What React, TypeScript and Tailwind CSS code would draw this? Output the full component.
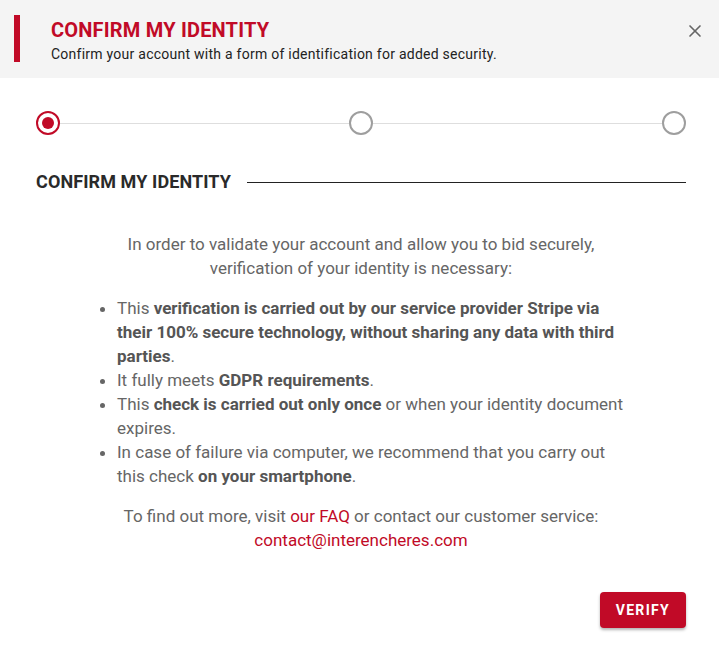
import { X } from "lucide-react";

const Step = ({ active }: { active?: boolean }) => (
    <div
        className={`flex items-center justify-center w-6 h-6 rounded-full border-2 shrink-0 ${
            active ? "border-[#c10a27]" : "border-[#9e9e9e]"
        }`}
    >
        {active && <div className="w-3 h-3 rounded-full bg-[#c10a27]" />}
    </div>
);

export default function App() {
    return (
        <div className="w-[719px] h-[656px] bg-white font-['Roboto',sans-serif] overflow-hidden">
            <header className="flex items-start justify-between h-[78px] bg-[#f4f4f4] pl-[14px] pr-[14px] pt-[15px]">
                <div className="flex gap-[31px]">
                    <div className="w-[6px] h-[47px] bg-[#c10a27]" />
                    <div className="flex flex-col pt-[3px]">
                        <h1 className="text-[20px] leading-[24px] font-bold text-[#c10a27] tracking-[0.2px]">
                            CONFIRM MY IDENTITY
                        </h1>
                        <p className="mt-[4px] text-[14px] leading-[17px] text-[#222] tracking-[0.25px]">
                            Confirm your account with a form of identification for added security.
                        </p>
                    </div>
                </div>
                <button className="mt-[6px] text-[#666]">
                    <X size={20} strokeWidth={2} />
                </button>
            </header>

            <div className="flex items-center pl-[36px] pr-[33px] pt-[33px]">
                <Step active />
                <div className="flex-1 h-px bg-[#dedede]" />
                <Step />
                <div className="flex-1 h-px bg-[#dedede]" />
                <Step />
            </div>

            <div className="flex items-center gap-4 pl-[36px] pr-[33px] mt-[36px]">
                <h2 className="text-[18px] leading-[22px] font-bold text-[#2a2a2a] shrink-0 tracking-[0.1px]">
                    CONFIRM MY IDENTITY
                </h2>
                <div className="flex-1 h-px bg-[#222]" />
            </div>

            <div className="pl-[36px] pr-[33px]">
                <div className="w-[540px] mx-auto mt-[39px] text-[17px] leading-[24px] text-[#666]">
                    <p className="text-center">
                        In order to validate your account and allow you to bid securely,
                        <br />
                        verification of your identity is necessary:
                    </p>
                    <ul className="list-disc pl-[26px] mt-[16px]">
                        <li>
                            This{" "}
                            <b className="text-[#555]">
                                verification is carried out by our service provider Stripe via their 100% secure technology,
                                without sharing any data with third parties
                            </b>
                            .
                        </li>
                        <li>
                            It fully meets <b className="text-[#555]">GDPR requirements</b>.
                        </li>
                        <li>
                            This <b className="text-[#555]">check is carried out only once</b> or when your identity document
                            expires.
                        </li>
                        <li>
                            In case of failure via computer, we recommend that you carry out this check{" "}
                            <b className="text-[#555]">on your smartphone</b>.
                        </li>
                    </ul>
                    <p className="text-center mt-[16px]">
                        To find out more, visit <a className="text-[#c10a27]">our FAQ</a> or contact our customer service:
                        <br />
                        <a className="text-[#c10a27]">contact@interencheres.com</a>
                    </p>
                </div>
            </div>

            <div className="flex justify-end pl-[36px] pr-[33px] mt-[40px]">
                <button className="h-[36px] px-[16px] rounded bg-[#c10a27] text-white text-[14px] font-bold tracking-[1.3px] shadow-[0_2px_3px_rgba(0,0,0,0.3)]">
                    VERIFY
                </button>
            </div>
        </div>
    );
}
